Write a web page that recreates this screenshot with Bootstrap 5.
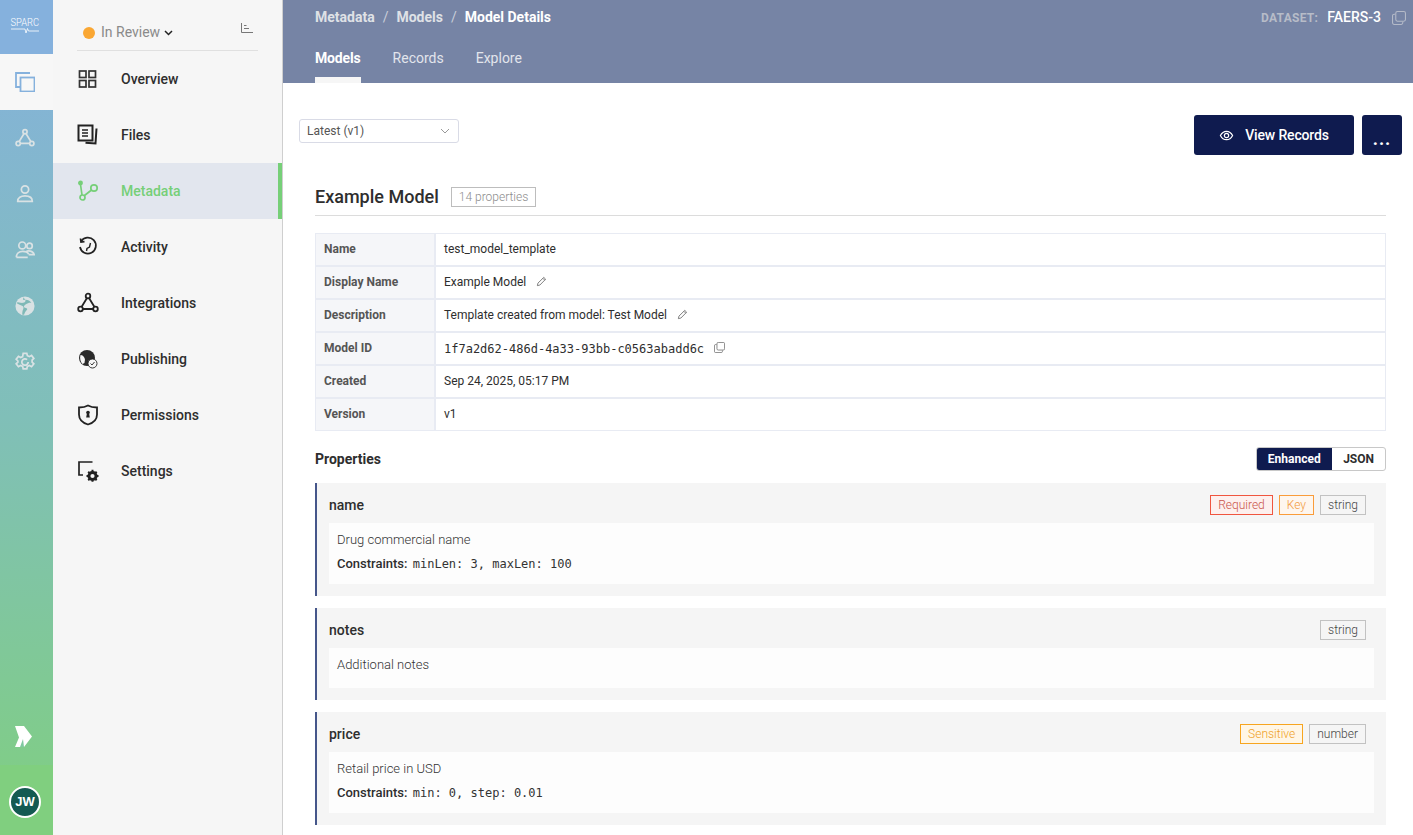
<!DOCTYPE html>
<html lang="en">
<head>
    <meta charset="UTF-8">
    <title>Model Details</title>
    <link href="https://cdn.jsdelivr.net/npm/bootstrap@5.3.0/dist/css/bootstrap.min.css" rel="stylesheet">
    <style>
        html, body { height: 100%; overflow: hidden; }
        body { font-family: Roboto, sans-serif; font-size: 12px; color: #2e2e2e; background: #fff; }
        .app-shell { height: 835px; }
        .rail { width: 53px; flex: none; background: linear-gradient(180deg, #85b1dd 0%, #80bfb8 50%, #80cf80 100%); }
        .rail-logo { height: 54px; color: #fff; background: #85b1dd; padding: 0 3px 3px 0; }
        .rail-logo-text { font-size: 11px; line-height: 10px; font-weight: 300; transform: scaleX(.85); }
        .rail-item { height: 56px; padding-right: 3px; }
        .rail-item.is-active { background: #f7f7f7; }
        .rail-arrow { padding: 0 6px 18px 0; }
        .rail-bottom { height: 70px; background: #80cf7f; padding: 4px 3px 0 0; }
        .rail-avatar { width: 32px; height: 32px; border: 2px solid #fff; border-radius: 50%; background: #145a52; color: #fff; font-size: 13px; font-weight: 700; font-family: "Liberation Sans", sans-serif; }
        .side { width: 230px; flex: none; background: #f6f6f6; border-right: 1px solid #cfcfcf; }
        .side-status { height: 51px; margin: 0 24px 0 24px; border-bottom: 1px solid #e0e0e0; padding: 15px 5px 0 6px; }
        .status-dot { width: 12px; height: 12px; background: #faa733; border-radius: 50%; }
        .status-text { font-size: 14px; color: #8a8a8a; margin-left: 6px; }
        .lines-icon { margin-top: -10px; }
        .side-link { height: 56px; padding-left: 24px; font-size: 14px; font-weight: 500; color: #2e2e2e; text-decoration: none; }
        .side-link svg { width: 22px; height: 22px; margin-right: 22px; flex: none; }
        .side-link.is-current { background: #e2e6ee; color: #76cf78; border-right: 4px solid #76cf78; }
        .main-pane { min-width: 0; }
        .top-band { height: 83px; background: #7684a5; color: #fff; padding: 0 7px 0 32px; flex: none; }
        .crumbs { height: 33px; padding-top: 2px; font-size: 14px; font-weight: 700; color: #dfe1e6; }
        .crumbs .sep { font-weight: 400; margin: 0 8px; color: #c9ced9; }
        .crumbs .here { color: #fff; }
        .ds-label { font-size: 12px; font-weight: 700; letter-spacing: .3px; color: #b7bcc8; margin-right: 9px; }
        .ds-name { font-size: 14px; font-weight: 500; color: #fff; margin-right: 11px; }
        .tabs-row { height: 50px; gap: 32px; font-size: 14px; }
        .tab-link { color: #e2e5ec; text-decoration: none; line-height: 50px; height: 50px; }
        .tab-link.is-on { color: #fff; font-weight: 700; letter-spacing: -.15px; border-bottom: 6px solid #f6f6f6; }
        .pane-body { padding: 32px 11px 0 16px; overflow: hidden; }
        .version-pick { width: 160px; height: 24px; margin-top: 4px; border: 1px solid #d9dbe6; border-radius: 3px; padding: 0 8px 0 7px; color: #555; }
        .btn-navy { background: #0f1b4f; color: #fff; border: 0; border-radius: 3px; height: 40px; font-size: 14px; font-weight: 500; letter-spacing: -.15px; }
        .btn-navy:hover { background: #0f1b4f; color: #fff; }
        .btn-view { width: 160px; }
        .btn-view span { margin-left: 3px; }
        .btn-more { width: 40px; margin-left: 8px; font-size: 18px; font-weight: 700; line-height: 1; padding: 8px 0 0; letter-spacing: 1px; }
        .model-head { margin-top: 29px; margin-left: 16px; width: 1071px; height: 32px; padding-bottom: 6px; border-bottom: 1px solid #dcdcdc; }
        .model-title { font-size: 18px; font-weight: 500; margin: 0; color: #2e2e2e; }
        .count-tag { margin-left: 12px; height: 20px; border: 1px solid #bdbdbd; padding: 0 7px; color: #8c8c8c; line-height: 18px; font-weight: 300; }
        .facts { margin: 17px 0 0 16px; width: 1071px; border: 1px solid #e8ebf3; }
        .fact-row { height: 33px; border-bottom: 2px solid #e8ebf3; }
        .fact-row:last-child { border-bottom: 0; height: 31px; }
        .fact-key { width: 120px; flex: none; background: #f5f6f9; border-right: 2px solid #e8ebf3; padding: 0 0 2px 8px; font-weight: 700; color: #555; }
        .fact-val { padding: 0 0 2px 8px; color: #2e2e2e; }
        .fact-val svg { margin-left: 10px; }
        .fact-val .mono-text { padding-top: 2px; }
        .mono-text { font-family: "DejaVu Sans Mono", monospace; font-size: 12px; }
        .prop-bar { margin-top: 16px; margin-left: 16px; height: 24px; width: 1071px; }
        .prop-heading { font-size: 14px; font-weight: 700; }
        .view-toggle { border: 1px solid #c8c8c8; border-radius: 3px; height: 24px; overflow: hidden; font-weight: 700; }
        .view-toggle span { padding: 0 11px; line-height: 22px; }
        .view-toggle .on { background: #0f1b4f; color: #fff; padding: 0 11.500px; margin: -1px 0 -1px -1px; line-height: 24px; }
        .prop-card { margin: 12px 0 0 16px; width: 1071px; background: #f5f5f5; border-left: 2px solid #45568a; padding: 0 12px 12px 12px; }
        .prop-head { height: 40px; padding: 4px 8px 0 0; }
        .prop-name { font-size: 14px; font-weight: 500; color: #2e2e2e; }
        .prop-inner { background: #fdfdfd; padding: 9px 8px 8px; font-size: 13px; }
        .prop-inner.note-only { padding-bottom: 15px; }
        .prop-inner p { margin: 0 0 7px; line-height: 16px; color: #333; font-weight: 300; }
        .prop-inner p:last-child { margin-bottom: 0; }
        .prop-inner p.rule-line { line-height: 18px; padding-bottom: 3px; font-weight: 400; }
        .prop-inner b { font-weight: 500; color: #2e2e2e; }
        .prop-inner .mono-text { margin-left: 2px; }
        .tag-chip { height: 20px; border: 1px solid #c2c2c2; padding: 0 7px; line-height: 18px; color: #444; margin-left: 6px; font-weight: 300; }
        .chip-red { border-color: #f0553f; color: #c9544a; background: #fdf0ee; }
        .chip-orange { border-color: #fa9c3a; color: #f39a3c; background: #fef6ee; }
        .chip-amber { border-color: #f7a51f; color: #ef9f25; background: #fff6e6; }
    </style>
</head>
<body>
    <div class="app-shell d-flex">
        <!-- icon rail -->
        <div class="rail d-flex flex-column">
            <div class="rail-logo d-flex flex-column align-items-center justify-content-center">
                <span class="rail-logo-text">SPARC</span>
                <svg width="28" height="6" viewBox="0 0 28 6" fill="none" stroke="#fff" stroke-width=".8"><path d="M0 1h14l1 4 1.500-4.500 1 2.500h10.500"/></svg>
            </div>
            <div class="rail-item is-active d-flex align-items-center justify-content-center">
                <svg width="20" height="20" viewBox="0 0 20 20" fill="none" stroke="#85b1dd" stroke-width="1.800"><path d="M15 1H1v14h4"/><rect x="5.500" y="5.500" width="14" height="14"/></svg>
            </div>
            <div class="rail-item d-flex align-items-center justify-content-center">
                <svg width="20" height="20" viewBox="0 0 22 22" fill="none" stroke="#d9e2e4" stroke-width="1.900"><circle cx="11" cy="4" r="2.300"/><circle cx="3.500" cy="17" r="2.300"/><circle cx="18.500" cy="17" r="2.300"/><path d="M10 6l-5.500 9M12 6l5.500 9M6 17h10"/></svg>
            </div>
            <div class="rail-item d-flex align-items-center justify-content-center">
                <svg width="20" height="20" viewBox="0 0 22 22" fill="none" stroke="#d9e2e4" stroke-width="1.900"><circle cx="11" cy="6" r="4"/><path d="M3 19c0-4 3.500-6 8-6s8 2 8 6zM3 19h16"/></svg>
            </div>
            <div class="rail-item d-flex align-items-center justify-content-center">
                <svg width="20" height="20" viewBox="0 0 22 22" fill="none" stroke="#d9e2e4" stroke-width="1.900"><circle cx="8" cy="6" r="3.800"/><circle cx="16" cy="6.500" r="3"/><path d="M1.500 19c0-4 3-6.500 7-6.500s6 2 6.500 3M1.500 19H14M12 13c2-1.500 8-1.500 9 3h-6"/></svg>
            </div>
            <div class="rail-item d-flex align-items-center justify-content-center">
                <svg width="20" height="20" viewBox="0 0 22 22"><circle cx="11" cy="11" r="10.500" fill="#d9e2e4"/><path d="M9 1.500c1 2 3 2 2.500 4S8 8 6 7.500 2.500 6 2 8c2 1 3 2 5 2.500s3 2 2 4-1 4-1 6l2 0c1-2 1-3 3-5s-2-2-3-3 1-3 3-4 3-1 5-1c-2-3-5-4-9-3z" fill="#7fb9b7"/></svg>
            </div>
            <div class="rail-item d-flex align-items-center justify-content-center">
                <svg width="20" height="20" viewBox="0 0 22 22" fill="none" stroke="#d9e2e4" stroke-width="1.900"><path d="M9 1.500h4l.6 2.600 2.200 1 2.400-1.300 2.500 3.200-1.900 1.900v2.200l1.900 1.900-2.500 3.200-2.400-1.300-2.200 1-.6 2.600H9l-.6-2.600-2.200-1-2.400 1.300-2.500-3.200 1.900-1.900V9.900L1.300 8l2.500-3.200 2.400 1.300 2.200-1z"/><path d="M14.500 11a3.500 3.500 0 1 1-1.200-2.600"/></svg>
            </div>
            <div class="rail-arrow flex-grow-1 d-flex flex-column justify-content-end align-items-center">
                <svg width="19" height="21" viewBox="0 0 19 21" fill="#fff"><path d="M1 0h9l8 10.500L10 21H1l4-9.500L1 0z"/><path d="M9 13l-3 8h4z" fill="#80c9a0"/></svg>
            </div>
            <div class="rail-bottom d-flex align-items-center justify-content-center">
                <span class="rail-avatar d-flex align-items-center justify-content-center">JW</span>
            </div>
        </div>

        <!-- section sidebar -->
        <div class="side d-flex flex-column">
            <div class="side-status d-flex align-items-center">
                <span class="status-dot"></span>
                <span class="status-text">In Review</span>
                <svg class="ms-1" width="9" height="6" viewBox="0 0 9 6" fill="none" stroke="#222" stroke-width="1.500"><path d="M1 1l3.500 3.500L8 1"/></svg>
                <svg class="lines-icon ms-auto" width="12" height="10" viewBox="0 0 12 10" fill="none" stroke="#777" stroke-width="1"><path d="M.5 0v9.500M.5 9.500h11.500M3 2.500h2.500M3 5.500h5"/></svg>
            </div>
            <a class="side-link d-flex align-items-center" href="#">
                <svg viewBox="0 0 22 22" fill="none" stroke="#333" stroke-width="1.700"><rect x="2.500" y="3" width="6.500" height="6.500"/><rect x="12" y="3" width="6.500" height="6.500"/><rect x="2.500" y="12.500" width="6.500" height="6.500"/><rect x="12" y="12.500" width="6.500" height="6.500"/></svg>Overview
            </a>
            <a class="side-link d-flex align-items-center" href="#">
                <svg viewBox="0 0 22 22" fill="none" stroke="#222" stroke-width="2"><rect x="1.500" y="1.500" width="14" height="15"/><path d="M5 6h6M5 9h6M5 12h6" stroke-width="1.600"/><path d="M19.500 4.500l-1 15-10-.8"/></svg>Files
            </a>
            <a class="side-link is-current d-flex align-items-center" href="#">
                <svg viewBox="0 0 22 22" fill="none" stroke="#76cf78" stroke-width="1.700"><circle cx="3.500" cy="3" r="1.600" fill="#76cf78"/><circle cx="5.500" cy="17.500" r="2.500"/><circle cx="17" cy="8" r="3.200"/><path d="M3.500 4.500l1.500 10.500M7.500 15.500l7-5.500"/></svg>Metadata
            </a>
            <a class="side-link d-flex align-items-center" href="#">
                <svg viewBox="0 0 22 22" fill="none" stroke="#222" stroke-width="1.700"><path d="M4 5.500A8 8 0 1 1 3 11"/><path d="M3.500 2.500l.5 3.500 3.500-.3" /><path d="M13.500 7l-1 4-2.500 1.500-.5 2.500" stroke-width="1.400"/></svg>Activity
            </a>
            <a class="side-link d-flex align-items-center" href="#">
                <svg viewBox="0 0 22 22" fill="none" stroke="#222" stroke-width="1.800"><circle cx="11" cy="4" r="2.300"/><circle cx="3.500" cy="17" r="2.300"/><circle cx="18.500" cy="17" r="2.300"/><path d="M10 6l-5.500 9M12 6l5.500 9M6 17h10"/></svg>Integrations
            </a>
            <a class="side-link d-flex align-items-center" href="#">
                <svg viewBox="0 0 22 22"><circle cx="10" cy="10" r="8" fill="#2a2a2a"/><path d="M3.500 7c2 0 3 1 4 3s0 3 0 5l-2 1c-2-2-3-6-2-9z" fill="#f6f6f6"/><circle cx="15.500" cy="15.500" r="4.500" fill="#f6f6f6" stroke="#222" stroke-width=".9"/><path d="M13.500 15.500l1.500 1.500 2.500-3" fill="none" stroke="#222" stroke-width=".9"/></svg>Publishing
            </a>
            <a class="side-link d-flex align-items-center" href="#">
                <svg viewBox="0 0 22 22" fill="none" stroke="#222" stroke-width="1.800"><path d="M11 1.500c2.500 1.500 5.500 2 9 2v7c0 5-4 8.500-9 10-5-1.500-9-5-9-10v-7c3.500 0 6.500-.5 9-2z"/><circle cx="11" cy="8.500" r="1.800" fill="#222" stroke="none"/><path d="M10 9h2l.8 4.500H9.200z" fill="#222" stroke="none"/></svg>Permissions
            </a>
            <a class="side-link d-flex align-items-center" href="#">
                <svg viewBox="0 0 22 22" fill="none" stroke="#222" stroke-width="1.700"><path d="M15.500 2H2v13h4"/><circle cx="15.500" cy="16" r="3.600" stroke-width="3"/><path d="M15.500 9.800v2.500M15.500 19.800v2M9.500 16h2.300M19.500 16h2M11.200 11.800l1.600 1.600M18.200 18.700l1.500 1.500M11.200 20.200l1.600-1.500M18.200 13.300l1.500-1.500" stroke-width="2"/></svg>Settings
            </a>
        </div>

        <!-- main -->
        <div class="main-pane flex-grow-1 d-flex flex-column">
            <div class="top-band">
                <div class="crumbs d-flex align-items-center">
                    <span>Metadata</span><span class="sep">/</span><span>Models</span><span class="sep">/</span><span class="here">Model Details</span>
                    <span class="ds-label ms-auto">DATASET:</span><span class="ds-name">FAERS-3</span>
                    <svg width="14" height="14" viewBox="0 0 13 13" fill="none" stroke="#b4bac8" stroke-width="1"><rect x="3.500" y=".5" width="9" height="9" rx="1.500"/><path d="M3 3H2a1.500 1.500 0 0 0-1.500 1.500V11A1.500 1.500 0 0 0 2 12.500h6.500A1.500 1.500 0 0 0 10 11v-1"/></svg>
                </div>
                <div class="tabs-row d-flex">
                    <a class="tab-link is-on" href="#">Models</a>
                    <a class="tab-link" href="#">Records</a>
                    <a class="tab-link" href="#">Explore</a>
                </div>
            </div>

            <div class="pane-body flex-grow-1">
                <div class="d-flex justify-content-between align-items-start">
                    <div class="version-pick d-flex align-items-center justify-content-between">
                        <span>Latest (v1)</span>
                        <svg width="10" height="6" viewBox="0 0 10 6" fill="none" stroke="#999" stroke-width="1"><path d="M1 1l4 4 4-4"/></svg>
                    </div>
                    <div class="d-flex">
                        <button class="btn btn-navy btn-view d-flex align-items-center justify-content-center" type="button">
                            <svg class="me-2" width="15" height="15" viewBox="0 0 16 16" fill="none" stroke="#fff" stroke-width="1.300"><path d="M1.500 8C3 5 5.200 3.500 8 3.500S13 5 14.500 8C13 11 10.800 12.500 8 12.500S3 11 1.500 8z"/><circle cx="8" cy="8" r="2.300"/></svg>
                            <span>View Records</span>
                        </button>
                        <button class="btn btn-navy btn-more" type="button">...</button>
                    </div>
                </div>

                <div class="model-head d-flex align-items-center">
                    <h5 class="model-title">Example Model</h5>
                    <span class="count-tag">14 properties</span>
                </div>

                <div class="facts">
                    <div class="fact-row d-flex align-items-stretch"><div class="fact-key d-flex align-items-center">Name</div><div class="fact-val d-flex align-items-center">test_model_template</div></div>
                    <div class="fact-row d-flex align-items-stretch"><div class="fact-key d-flex align-items-center">Display Name</div><div class="fact-val d-flex align-items-center">Example Model
                        <svg width="11" height="11" viewBox="0 0 12 12" fill="none" stroke="#666" stroke-width=".9"><path d="M1.500 10.500l.6-2.700L8.500 1.500l2 2-6.300 6.400zM7.500 2.500l2 2"/></svg></div></div>
                    <div class="fact-row d-flex align-items-stretch"><div class="fact-key d-flex align-items-center">Description</div><div class="fact-val d-flex align-items-center">Template created from model: Test Model
                        <svg width="11" height="11" viewBox="0 0 12 12" fill="none" stroke="#666" stroke-width=".9"><path d="M1.500 10.500l.6-2.700L8.500 1.500l2 2-6.300 6.400zM7.500 2.500l2 2"/></svg></div></div>
                    <div class="fact-row d-flex align-items-stretch"><div class="fact-key d-flex align-items-center">Model ID</div><div class="fact-val d-flex align-items-center"><span class="mono-text">1f7a2d62-486d-4a33-93bb-c0563abadd6c</span>
                        <svg width="11" height="11" viewBox="0 0 13 13" fill="none" stroke="#777" stroke-width="1"><rect x="3.500" y=".5" width="9" height="9" rx="1.500"/><path d="M3 3H2a1.500 1.500 0 0 0-1.500 1.500V11A1.500 1.500 0 0 0 2 12.500h6.500A1.500 1.500 0 0 0 10 11v-1"/></svg></div></div>
                    <div class="fact-row d-flex align-items-stretch"><div class="fact-key d-flex align-items-center">Created</div><div class="fact-val d-flex align-items-center">Sep 24, 2025, 05:17 PM</div></div>
                    <div class="fact-row d-flex align-items-stretch"><div class="fact-key d-flex align-items-center">Version</div><div class="fact-val d-flex align-items-center">v1</div></div>
                </div>

                <div class="prop-bar d-flex justify-content-between align-items-center">
                    <span class="prop-heading">Properties</span>
                    <div class="view-toggle d-flex"><span class="on">Enhanced</span><span>JSON</span></div>
                </div>

                <div class="prop-card">
                    <div class="prop-head d-flex align-items-center">
                        <span class="prop-name me-auto">name</span>
                        <span class="tag-chip chip-red">Required</span><span class="tag-chip chip-orange">Key</span><span class="tag-chip">string</span>
                    </div>
                    <div class="prop-inner">
                        <p>Drug commercial name</p>
                        <p class="rule-line"><b>Constraints:</b> <span class="mono-text">minLen: 3, maxLen: 100</span></p>
                    </div>
                </div>

                <div class="prop-card">
                    <div class="prop-head d-flex align-items-center">
                        <span class="prop-name me-auto">notes</span>
                        <span class="tag-chip">string</span>
                    </div>
                    <div class="prop-inner note-only">
                        <p>Additional notes</p>
                    </div>
                </div>

                <div class="prop-card">
                    <div class="prop-head d-flex align-items-center">
                        <span class="prop-name me-auto">price</span>
                        <span class="tag-chip chip-amber">Sensitive</span><span class="tag-chip">number</span>
                    </div>
                    <div class="prop-inner">
                        <p>Retail price in USD</p>
                        <p class="rule-line"><b>Constraints:</b> <span class="mono-text">min: 0, step: 0.01</span></p>
                    </div>
                </div>
            </div>
        </div>
    </div>

    <script src="https://cdn.jsdelivr.net/npm/bootstrap@5.3.0/dist/js/bootstrap.bundle.min.js"></script>
</body>
</html>
